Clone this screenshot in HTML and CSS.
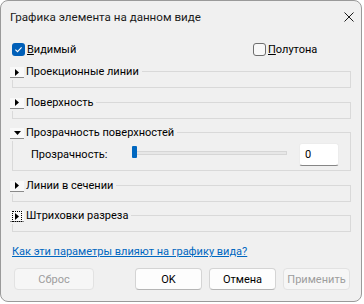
FILE: index.html
```html
<!DOCTYPE html>
<html lang="ru">
<head>
  <meta charset="UTF-8">
  <title>Графика элемента на данном виде</title>
  <link rel="stylesheet" href="styles.css">
</head>
<body>

  <div class="window">
    <div class="titlebar">
      <span class="title">Графика элемента на данном виде</span>
      <svg class="close" width="10" height="10" viewBox="0 0 10 10">
        <path d="M0.5 0.5 L9.5 9.5 M9.5 0.5 L0.5 9.5" stroke="#1b1b1b" stroke-width="1"/>
      </svg>
    </div>

    <div class="content">
      <div class="checks">
        <label class="check first">
          <span class="box checked">
            <svg width="13" height="13" viewBox="0 0 13 13"><path d="M3.4 6.7 L5.5 8.7 L9.6 4.4" fill="none" stroke="#fff" stroke-width="1.1"/></svg>
          </span>
          <span><u>В</u>идимый</span>
        </label>
        <label class="check">
          <span class="box"></span>
          <span><u>П</u>олутона</span>
        </label>
      </div>

      <fieldset class="group">
        <legend>
          <span class="toggle"><svg width="4" height="7" viewBox="0 0 4 7"><path d="M0 0 L4 3.5 L0 7 Z"/></svg></span>
          Проекционные линии
        </legend>
      </fieldset>

      <fieldset class="group">
        <legend>
          <span class="toggle"><svg width="4" height="7" viewBox="0 0 4 7"><path d="M0 0 L4 3.5 L0 7 Z"/></svg></span>
          Поверхность
        </legend>
      </fieldset>

      <fieldset class="group open">
        <legend>
          <span class="toggle"><svg width="7" height="4" viewBox="0 0 7 4"><path d="M0 0 L7 0 L3.5 4 Z"/></svg></span>
          Прозрачность поверхностей
        </legend>
        <div class="row">
          <span class="row-label">Прозрачность:</span>
          <div class="slider">
            <div class="track"></div>
            <div class="thumb"></div>
          </div>
          <input class="num" type="text" value="0">
        </div>
      </fieldset>

      <fieldset class="group">
        <legend>
          <span class="toggle"><svg width="4" height="7" viewBox="0 0 4 7"><path d="M0 0 L4 3.5 L0 7 Z"/></svg></span>
          Линии в сечении
        </legend>
      </fieldset>

      <fieldset class="group">
        <legend>
          <span class="toggle focused"><svg width="4" height="7" viewBox="0 0 4 7"><path d="M0 0 L4 3.5 L0 7 Z"/></svg></span>
          Штриховки разреза
        </legend>
      </fieldset>

      <div class="help"><a href="#">Как эти параметры влияют на графику вида?</a></div>

      <div class="buttons">
        <button class="btn wide" disabled>Сброс</button>
        <div class="btn-group">
          <button class="btn">OK</button>
          <button class="btn">Отмена</button>
          <button class="btn" disabled>Применить</button>
        </div>
      </div>
    </div>
  </div>

</body>
</html>
```

FILE: styles.css
```css
body {
  margin: 0;
  background: #fff;
  font-family: Roboto, "Noto Sans", sans-serif;
  font-size: 11px;
  color: #000;
}
.window {
  box-sizing: border-box;
  width: 362px;
  height: 302px;
  border: 1px solid #9a9a9a;
  border-radius: 8px;
  background: #f0f0f0;
  overflow: hidden;
}
.titlebar {
  height: 31px;
  display: flex;
  align-items: center;
  justify-content: space-between;
  padding: 0 7px 0 9px;
  font-size: 11.6px;
  color: #1b1b1b;
}
.content {
  padding: 0 10px 0 11px;
}
.checks {
  display: flex;
  margin-top: 11px;
  height: 13px;
  line-height: 13px;
}
.check {
  display: flex;
  align-items: center;
}
.check.first {
  width: 241px;
}
.box {
  box-sizing: border-box;
  width: 13px;
  height: 13px;
  margin-right: 2px;
  border: 1px solid #6e6e6e;
  border-radius: 3px;
  background: #f8f8f8;
}
.box.checked {
  border: none;
  background: #005fb8;
}
.box svg {
  display: block;
}

/* group boxes */
.group {
  margin: 5.5px 0 0;
  padding: 0 0 7px;
  border: 1px solid #d9d9d9;
  min-width: 0;
}
.group:first-of-type {
  margin-top: 7px;
}
.group legend {
  display: flex;
  align-items: center;
  height: 17px;
  line-height: 17px;
  margin-left: -3px;
  padding: 0 3px 0 0;
}
.toggle {
  box-sizing: border-box;
  display: flex;
  align-items: center;
  justify-content: center;
  width: 14px;
  height: 11px;
  margin-top: 2px;
  margin-right: 2px;
  background: #f9f9f9;
  border-bottom: 1px solid #8a8a8a;
}
.toggle svg {
  display: block;
  fill: #000;
}
.toggle.focused svg {
  box-sizing: content-box;
  padding: 1px 2px;
  border: 1px dotted #000;
}
.group.open {
  padding-bottom: 4px;
}
.row {
  display: flex;
  align-items: center;
  height: 23px;
  margin-top: 2px;
  padding: 0 11px 0 18px;
}
.row-label {
  width: 99px;
}
.slider {
  position: relative;
  flex: 1;
  height: 23px;
  margin-right: 8px;
}
.track {
  box-sizing: border-box;
  margin: 8px 4px 0 3px;
  height: 4px;
  border: 1px solid #d6d6d6;
  background: #e7e7e7;
}
.thumb {
  position: absolute;
  left: 2px;
  top: 3px;
  width: 5px;
  height: 12px;
  border-radius: 1px;
  background: #0067c0;
}
.num {
  box-sizing: border-box;
  width: 40px;
  height: 23px;
  padding: 0 0 0 5px;
  border: 1px solid #ececec;
  border-bottom-color: #868686;
  border-radius: 3px;
  background: #fff;
  font: inherit;
  color: #000;
}

.help {
  margin-top: 12px;
  line-height: 16px;
}
.help a {
  color: #0067c0;
}

.buttons {
  display: flex;
  justify-content: space-between;
  margin-top: 8px;
  padding: 0 1px 0 2px;
}
.btn-group {
  display: flex;
  gap: 7px;
}
.btn {
  box-sizing: border-box;
  width: 67px;
  height: 22px;
  padding: 0;
  border: 1px solid #d4d4d4;
  border-bottom-color: #b5b5b5;
  border-radius: 4px;
  background: #fdfdfd;
  font: inherit;
  color: #000;
}
.btn.wide {
  width: 80px;
}
.btn:disabled {
  border-color: #e2e2e2;
  background: #f6f6f6;
  color: #9d9d9d;
}
```
